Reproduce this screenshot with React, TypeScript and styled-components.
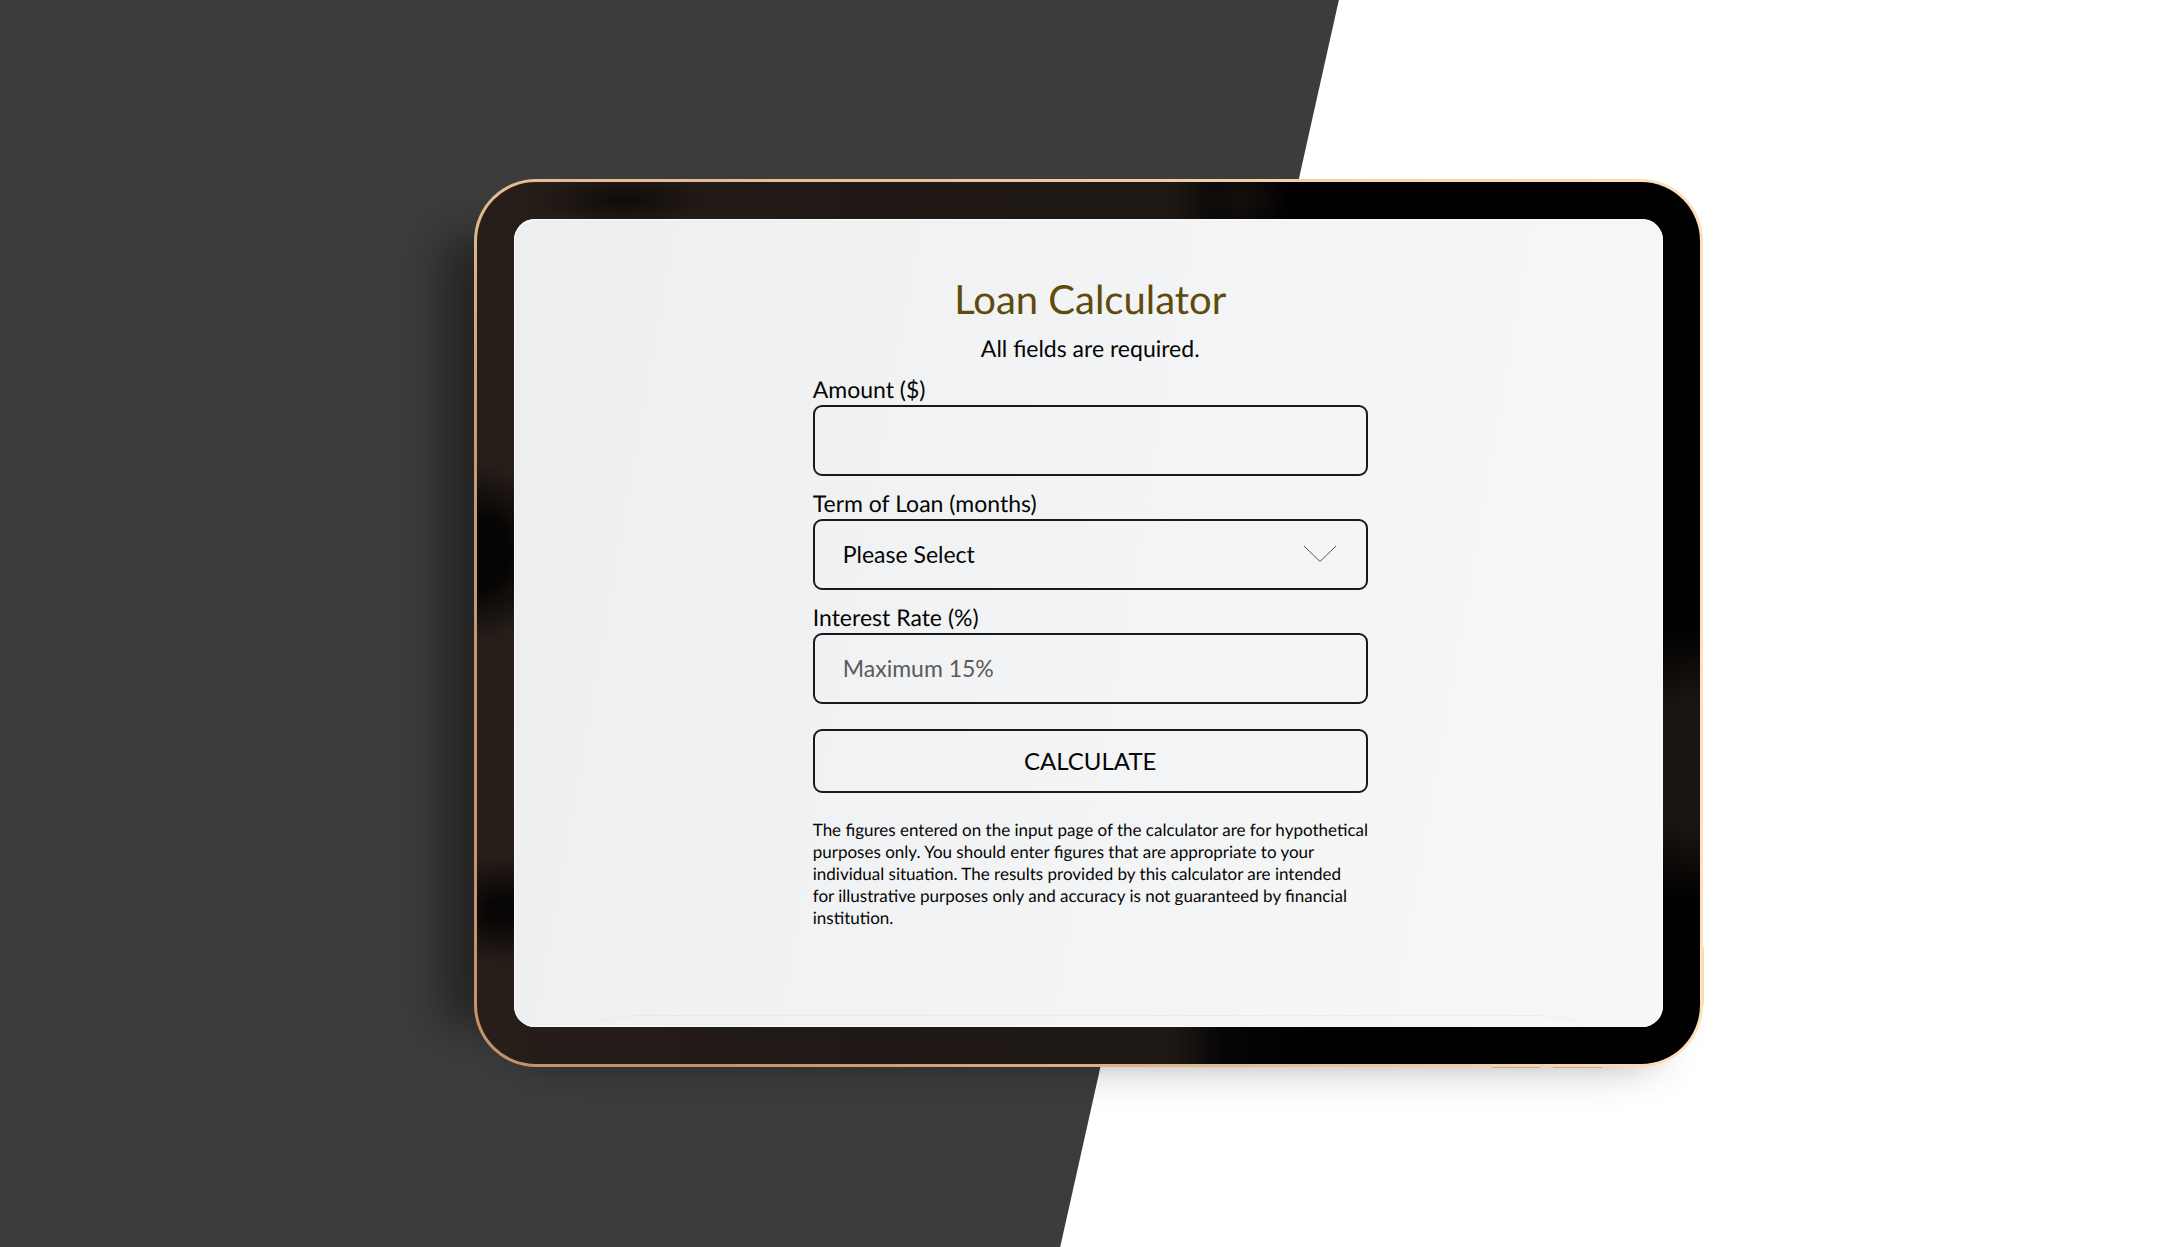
import React, { useState } from "react";
import styled, { createGlobalStyle } from "styled-components";

const GlobalStyle = createGlobalStyle`
  *, *::before, *::after { box-sizing: border-box; }
  body {
    margin: 0;
    background: #ffffff;
    color: #050505;
    font-family: Lato, "Open Sans", sans-serif;
    text-rendering: geometricPrecision;
  }
`;

const Page = styled.main`
  position: relative;
  isolation: isolate;
  min-height: 100vh;
  display: flex;
  align-items: center;
  justify-content: center;
  padding: 40px 24px 42px;

  &::before {
    content: "";
    position: absolute;
    inset: 0;
    z-index: -1;
    background: #3c3c3c;
    clip-path: polygon(0 0, 61.5% 0, 48.7% 100%, 0 100%);
  }
`;

const Tablet = styled.div`
  position: relative;
  width: 100%;
  max-width: 1229px;
  padding: 3px;
  border-radius: 62px;
  background: linear-gradient(to right, rgba(253, 224, 189, 0) 20%, #fde0bd 100%),
    linear-gradient(to bottom, #e6bd92 0%, #c99a74 30%, #c4926b 100%);
  box-shadow:
    -82px 8px 46px -50px rgba(0, 0, 0, 0.42),
    0 42px 46px -50px rgba(0, 0, 0, 0.42);
`;

const SideKey = styled.span<{ $edge: "right" | "bottom"; $at: string; $length: number }>`
  position: absolute;
  background: ${(p) => (p.$edge === "right" ? "#fbd9a9" : "#dba67c")};
  ${(p) =>
    p.$edge === "right"
      ? `left: 100%; top: ${p.$at}; width: 1px; height: ${p.$length}px;`
      : `top: 100%; left: ${p.$at}; height: 1px; width: ${p.$length}px;`}
`;

const Bezel = styled.div`
  padding: 37px;
  border-radius: 59px;
  background:
    radial-gradient(ellipse 90px 26px at 12% 2%, #0f0b08 0%, rgba(15, 11, 8, 0) 100%),
    radial-gradient(ellipse 80px 88px at 0% 42%, #060504 40%, rgba(6, 5, 4, 0) 100%),
    radial-gradient(ellipse 70px 54px at 2% 82.5%, #080605 20%, rgba(8, 6, 5, 0) 100%),
    radial-gradient(ellipse 120px 140px at 100% 66%, #1b1511 45%, rgba(27, 21, 17, 0) 100%),
    radial-gradient(ellipse 46px 40px at 62.5% 2%, #15100d 0%, rgba(21, 16, 13, 0) 100%),
    linear-gradient(to right, #271e1a 0%, #211917 30%, #1d1814 57%, #060505 61%, #000000 68%);
`;

const Screen = styled.div`
  position: relative;
  overflow: hidden;
  padding: 57px 25.7% 98px 26%;
  border-radius: 21px;
  background: linear-gradient(100deg, #edeef0 0%, #f0f1f2 25%, #f3f4f5 55%, #f6f6f6 80%, #f6f7f7 100%);
  box-shadow: inset 0 0 0 1px #fbfbfb;

  &::after {
    content: "";
    position: absolute;
    left: 7%;
    right: 7%;
    bottom: 0;
    height: 12px;
    border-top: 1px solid rgba(60, 70, 80, 0.05);
    border-radius: 50px 50px 0 0 / 12px 12px 0 0;
    pointer-events: none;
  }
`;

const Form = styled.form`
  display: flex;
  flex-direction: column;
  gap: 12px;
`;

const Title = styled.h1`
  margin: 0;
  font-size: 40px;
  line-height: 46px;
  font-weight: 400;
  text-align: center;
  color: #5f4b0b;
`;

const Note = styled.p`
  margin: 0;
  font-size: 23px;
  line-height: 28px;
  text-align: center;
`;

const Field = styled.div`
  display: flex;
  flex-direction: column;
  gap: 1px;
`;

const Label = styled.label`
  font-size: 23px;
  line-height: 30px;
`;

const Input = styled.input`
  width: 100%;
  height: 71px;
  padding: 0 28px;
  border: 2px solid #1a1a1a;
  border-radius: 9px;
  background: transparent;
  color: inherit;
  font: inherit;
  font-size: 23px;

  &::placeholder {
    color: #5a5a5c;
    opacity: 1;
  }
`;

const SelectWrap = styled.div`
  position: relative;
`;

const Select = styled(Input).attrs({ as: "select" })`
  display: block;
  appearance: none;
`;

const Chevron = styled.svg`
  position: absolute;
  right: 31px;
  top: 50%;
  width: 34px;
  height: 18px;
  transform: translateY(-50%);
  pointer-events: none;
`;

const Submit = styled.button`
  height: 64px;
  margin-top: 13px;
  border: 2px solid #1a1a1a;
  border-radius: 9px;
  background: transparent;
  color: inherit;
  font: inherit;
  font-size: 24px;
  text-transform: uppercase;
  cursor: pointer;
`;

const Disclaimer = styled.p`
  margin: 14px -8px 0 0;
  font-size: 17px;
  line-height: 22px;
`;

const TERMS = ["12", "24", "36", "48", "60"];

export default function App() {
  const [amount, setAmount] = useState("");
  const [term, setTerm] = useState("");
  const [rate, setRate] = useState("");

  return (
    <>
      <GlobalStyle />
      <Page>
        <Tablet>
          <SideKey $edge="right" $at="86.5%" $length={58} />
          <SideKey $edge="bottom" $at="82.8%" $length={48} />
          <SideKey $edge="bottom" $at="87.8%" $length={49} />
          <Bezel>
            <Screen>
              <Form onSubmit={(e) => e.preventDefault()}>
                <Title>Loan Calculator</Title>
                <Note>All fields are required.</Note>
                <Field>
                  <Label htmlFor="amount">Amount ($)</Label>
                  <Input
                    id="amount"
                    inputMode="decimal"
                    required
                    value={amount}
                    onChange={(e) => setAmount(e.target.value)}
                  />
                </Field>
                <Field>
                  <Label htmlFor="term">Term of Loan (months)</Label>
                  <SelectWrap>
                    <Select
                      id="term"
                      required
                      value={term}
                      onChange={(e: React.ChangeEvent<any>) => setTerm(e.target.value)}
                    >
                      <option value="">Please Select</option>
                      {TERMS.map((months) => (
                        <option key={months} value={months}>
                          {months}
                        </option>
                      ))}
                    </Select>
                    <Chevron viewBox="0 0 34 18" fill="none" stroke="#555555" aria-hidden="true">
                      <path d="M1 1 L17 16.5 L33 1" />
                    </Chevron>
                  </SelectWrap>
                </Field>
                <Field>
                  <Label htmlFor="rate">Interest Rate (%)</Label>
                  <Input
                    id="rate"
                    inputMode="decimal"
                    required
                    placeholder="Maximum 15%"
                    value={rate}
                    onChange={(e) => setRate(e.target.value)}
                  />
                </Field>
                <Submit type="submit">Calculate</Submit>
                <Disclaimer>
                  The figures entered on the input page of the calculator are for hypothetical purposes only. You
                  should enter figures that are appropriate to your individual situation. The results provided by
                  this calculator are intended
                  <br />
                  for illustrative purposes only and accuracy is not guaranteed by financial institution.
                </Disclaimer>
              </Form>
            </Screen>
          </Bezel>
        </Tablet>
      </Page>
    </>
  );
}
